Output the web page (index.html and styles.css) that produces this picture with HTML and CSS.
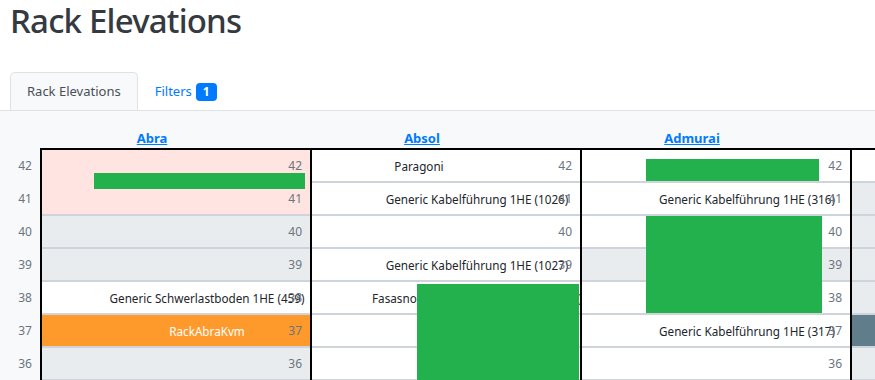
FILE: index.html
```html
<!DOCTYPE html>
<html lang="de">
<head>
    <meta charset="UTF-8">
    <meta name="viewport" content="width=device-width, initial-scale=1.0">
    <title>Rack Elevations</title>
    <link rel="stylesheet" href="styles.css">
</head>
<body>

    <h1 class="page-title">Rack Elevations</h1>

    <!-- Tabs -->
    <ul class="tabs">
        <li class="tab active">Rack Elevations</li>
        <li class="tab"><a href="#">Filters</a><span class="badge">1</span></li>
    </ul>

    <div class="tab-content">
        <div class="elevations">

            <!-- Höheneinheiten links -->
            <div class="units">
                <div class="units-head"></div>
                <div class="unit">42</div>
                <div class="unit">41</div>
                <div class="unit">40</div>
                <div class="unit">39</div>
                <div class="unit">38</div>
                <div class="unit">37</div>
                <div class="unit">36</div>
                <div class="unit">35</div>
            </div>

            <!-- Rack Abra -->
            <div class="rack">
                <div class="rack-head"><a href="#">Abra</a></div>
                <div class="rack-body">
                    <div class="slot slot-2u reserved">
                        <span class="num">42</span>
                        <span class="num num-second">41</span>
                    </div>
                    <div class="slot blocked"><span class="num">40</span></div>
                    <div class="slot blocked"><span class="num">39</span></div>
                    <div class="slot"><span class="label">Generic Schwerlastboden 1HE (459)</span><span class="num">38</span></div>
                    <div class="slot kvm"><span class="label">RackAbraKvm</span><span class="num">37</span></div>
                    <div class="slot blocked"><span class="num">36</span></div>
                    <div class="slot blocked"><span class="num">35</span></div>
                    <div class="device abra-bar"></div>
                </div>
            </div>

            <!-- Rack Absol -->
            <div class="rack">
                <div class="rack-head"><a href="#">Absol</a></div>
                <div class="rack-body">
                    <div class="slot"><span class="label label-left">Paragoni</span><span class="num">42</span></div>
                    <div class="slot"><span class="label">Generic Kabelführung 1HE (1026)</span><span class="num">41</span></div>
                    <div class="slot"><span class="num">40</span></div>
                    <div class="slot"><span class="label">Generic Kabelführung 1HE (1027)</span><span class="num">39</span></div>
                    <div class="slot"><span class="label">Fasasnobel Patchfeld 24 Port Cat6 (88)</span><span class="num">38</span></div>
                    <div class="slot"><span class="num">37</span></div>
                    <div class="slot"><span class="num">36</span></div>
                    <div class="slot"><span class="num">35</span></div>
                    <div class="device absol-drag"></div>
                </div>
            </div>

            <!-- Rack Admurai -->
            <div class="rack">
                <div class="rack-head"><a href="#">Admurai</a></div>
                <div class="rack-body">
                    <div class="slot"><span class="num">42</span></div>
                    <div class="slot"><span class="label">Generic Kabelführung 1HE (316)</span><span class="num">41</span></div>
                    <div class="slot"><span class="num">40</span></div>
                    <div class="slot blocked"><span class="num">39</span></div>
                    <div class="slot"><span class="num">38</span></div>
                    <div class="slot"><span class="label">Generic Kabelführung 1HE (317)</span><span class="num">37</span></div>
                    <div class="slot"><span class="num">36</span></div>
                    <div class="slot"><span class="num">35</span></div>
                    <div class="device admurai-top"></div>
                    <div class="device admurai-server"></div>
                </div>
            </div>

            <!-- Rack Aegis -->
            <div class="rack">
                <div class="rack-head"><a href="#">Aegis</a></div>
                <div class="rack-body">
                    <div class="slot"><span class="num">42</span></div>
                    <div class="slot blocked"><span class="num">41</span></div>
                    <div class="slot blocked"><span class="num">40</span></div>
                    <div class="slot blocked"><span class="num">39</span></div>
                    <div class="slot blocked"><span class="num">38</span></div>
                    <div class="slot patch"><span class="num">37</span></div>
                    <div class="slot blocked"><span class="num">36</span></div>
                    <div class="slot blocked"><span class="num">35</span></div>
                </div>
            </div>

        </div>
    </div>

</body>
</html>
```

FILE: styles.css
```css
body {
    font-family: "Noto Sans", Arial, sans-serif;
    margin: 0;
    padding: 0;
    color: #212529;
    background-color: #fff;
    overflow: hidden;
}
.page-title {
    font-size: 33px;
    font-weight: 500;
    letter-spacing: -0.8px;
    line-height: 42px;
    color: #343a40;
    margin: 0 0 30px 10px;
}

/* Tabs */
.tabs {
    list-style: none;
    margin: 0;
    padding: 0 0 0 10px;
    display: flex;
    border-bottom: 1px solid #dee2e6;
}
.tab {
    font-size: 13px;
    line-height: 21px;
    padding: 8px 16px;
    border: 1px solid transparent;
    border-bottom: none;
    display: flex;
    align-items: center;
}
.tab a {
    color: #007bff;
    text-decoration: none;
}
.tab.active {
    color: #495057;
    background-color: #f8f9fa;
    border-color: #dee2e6;
    border-radius: 5px 5px 0 0;
}
.badge {
    background-color: #007bff;
    color: #fff;
    font-size: 12px;
    font-weight: 700;
    line-height: 18px;
    padding: 0 7px;
    border-radius: 4px;
    margin-left: 4px;
}

/* Rack-Ansicht */
.tab-content {
    background-color: #f8f9fa;
    padding: 17px 0 0 10px;
    height: 400px;
}
.elevations {
    display: flex;
    font-size: 11.7px;
}
.units {
    width: 30px;
    flex-shrink: 0;
}
.units-head {
    height: 22px;
}
.unit {
    height: 33px;
    line-height: 31px;
    text-align: center;
    color: #6c757d;
    font-size: 12px;
}
.rack {
    width: 270px;
    flex-shrink: 0;
}
.rack-head {
    height: 20px;
    line-height: 20px;
    text-align: center;
    padding-right: 46px;
    font-size: 13px;
    font-weight: 700;
}
.rack-head a {
    color: #007bff;
}
.rack-body {
    position: relative;
    border-left: 2px solid #000;
    border-top: 2px solid #000;
    background-color: #fff;
}
.slot {
    position: relative;
    height: 33px;
    box-sizing: border-box;
    border-bottom: 2px solid #ced4da;
    padding-left: 62px;
    display: flex;
    align-items: center;
    justify-content: center;
    overflow: hidden;
    white-space: nowrap;
}
.slot-2u {
    height: 66px;
}
.label-left {
    margin-right: 116px;
}
.num {
    position: absolute;
    right: 8px;
    top: 0;
    line-height: 31px;
    color: #6c757d;
    font-size: 12px;
}
.num-second {
    top: 33px;
}
.blocked {
    background-color: #e9ecef;
}
.reserved {
    background-color: #ffe4e1;
}
.kvm {
    background-color: #fe9a2c;
    color: #fff;
}
.kvm .num {
    color: #6c757d;
}
.patch {
    background-color: #607d8b;
}

/* Geräte */
.device {
    position: absolute;
    background-color: #22b14c;
}
.abra-bar {
    left: 52px;
    top: 23px;
    width: 211px;
    height: 16px;
}
.absol-drag {
    left: 105px;
    top: 134px;
    width: 162px;
    height: 130px;
}
.admurai-top {
    left: 64px;
    top: 9px;
    width: 173px;
    height: 22px;
}
.admurai-server {
    left: 64px;
    top: 66px;
    width: 176px;
    height: 97px;
}
```
